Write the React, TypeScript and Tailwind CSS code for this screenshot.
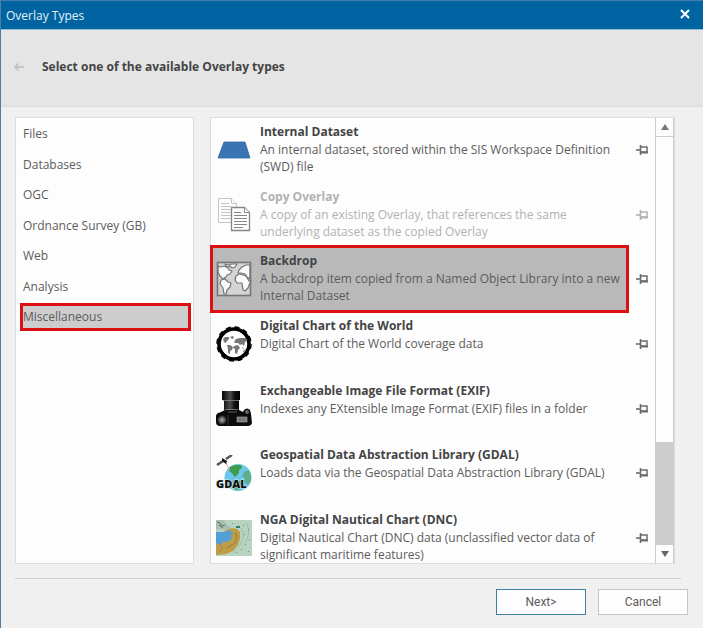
import { useState } from 'react';
import type { ReactNode } from 'react';
import { clsx } from 'clsx';

const CATEGORIES = ['Files', 'Databases', 'OGC', 'Ordnance Survey (GB)', 'Web', 'Analysis', 'Miscellaneous'];

function DatasetIcon() {
  return (
    <svg viewBox="0 0 36 36" className="size-9">
      <path d="M8 10h21l5 16H2z" fill="#3a74b3" stroke="#2f68a8" strokeWidth="0.8" />
    </svg>
  );
}

function CopyIcon() {
  return (
    <svg viewBox="0 0 36 36" className="size-9" fill="#fdfdfd" strokeWidth="1">
      <g stroke="#c4c4c4">
        <path d="M2.500 1.500h13l5 5v19h-18z" />
        <path d="M15.500 1.500v5h5" />
        <path d="M5 6.500h8M5 9.500h10M5 12.500h10M5 15.500h10M5 18.500h10M5 21.500h10" />
      </g>
      <g stroke="#868686">
        <path d="M15.500 10.500h13l5 5v18h-18z" strokeWidth="1.300" />
        <path d="M28.500 10.500v5h5" />
        <path d="M18 15.500h7M18 18.500h13M18 21.500h13M18 24.500h13M18 27.500h13M18 30.500h9" />
      </g>
    </svg>
  );
}

function BackdropIcon() {
  return (
    <svg viewBox="0 0 36 36" className="size-9">
      <rect x="1.500" y="1.500" width="33" height="33" fill="#d4d4d4" />
      <g fill="#fafafa" stroke="#757575" strokeWidth="1.200" strokeLinejoin="round">
        <path d="M2 5l3 1 3-1 4 2 1 2 3 1-2 3-3 1-1 2-2 1 1 2-2-1-3-3-2-4z" />
        <path d="M9 3l4 1 3-1 5 0-2 3-3 1-2-2-3 1z" />
        <path d="M5 19l4-1 3 3 3 1-1 4-3 3-1 4-2 0-1-6-3-4z" />
        <path d="M19 19l1-4 3-2 4 1 3 1 3 5 2 0-2 4-1 3-3 3-2-1-1-7-5 0z" />
        <path d="M22 12l1-3 3-3 4-2 4 0v14l-3-2-2-3-4-1z" />
      </g>
      <rect x="1.500" y="1.500" width="33" height="33" fill="none" stroke="#757575" strokeWidth="1.600" />
    </svg>
  );
}

function GlobeIcon() {
  return (
    <svg viewBox="0 0 36 36" className="size-9">
      <circle cx="18" cy="18" r="15" fill="#fff" stroke="#000" strokeWidth="3.600" />
      <circle cx="18" cy="18" r="17" fill="none" stroke="#000" strokeWidth="1.500" strokeDasharray="5 3.900" />
      <g fill="#777">
        <path d="M7 13l2-2 4 0 0 2-2 2-1 2-2-1z" />
        <path d="M14 11l3-1 1 2-2 1z" />
        <path d="M11 19l3 0 3 2-1 3-2 1 0 3-2-1 0-4z" />
        <path d="M18 20l4-1 2 3-2 2-1 4-2-1 0-4-2-1z" />
        <path d="M18 16l2-3 4-1 6 0 1 3-2 1-1 4-2-2-2 1-2-2-3 0z" />
        <path d="M27 25l3-2 0 2-3 1zM26 21l2 1-1 1z" />
      </g>
    </svg>
  );
}

function CameraIcon() {
  return (
    <svg viewBox="0 0 36 36" className="size-9">
      <defs>
        <linearGradient id="barrel" x1="0" x2="1" y1="0" y2="0">
          <stop offset="0" stopColor="#050505" />
          <stop offset="0.450" stopColor="#4d4d4d" />
          <stop offset="0.700" stopColor="#111" />
          <stop offset="1" stopColor="#000" />
        </linearGradient>
        <radialGradient id="knob">
          <stop offset="0" stopColor="#b5b5b5" />
          <stop offset="1" stopColor="#222" />
        </radialGradient>
      </defs>
      <path d="M6 0h18v9h-1v10H8V9H6z" fill="url(#barrel)" />
      <path d="M7 9.500h16M9 18.500h13" stroke="#888" strokeWidth="0.800" />
      <path d="M0 25q0-3 5-4l4-2h14l4 2 1-2q3-3 6 0l1 4 1 9q-1 3-4 3H4q-4 0-4-4z" fill="#0b0b0b" />
      <path d="M12 21h9" stroke="#5f5f5f" />
      <circle cx="6" cy="29" r="4.500" fill="url(#knob)" />
      <rect x="21" y="26" width="10" height="5" fill="#777" stroke="#aaa" strokeWidth="0.600" />
      <circle cx="31" cy="21" r="2" fill="#666" />
      <path d="M12 24v10" stroke="#3b3b3b" />
    </svg>
  );
}

function GdalIcon() {
  return (
    <svg viewBox="0 0 36 36" className="size-9">
      <circle cx="22" cy="22.500" r="13.500" fill="#6cc5ea" />
      <path d="M14 12l5-2 6 0 1 3-3 2 0 3-4 4-3-4-3-2z" fill="#3c9b4d" />
      <path d="M28 17l5-2 2 5 0 6-4 4-3-4 1-3-3-2z" fill="#5bb08a" />
      <path d="M17 26l9 0-2 8-5 1z" fill="#4da95f" />
      <path d="M10 8l4 8" stroke="#e98282" strokeWidth="0.800" />
      <path d="M1 10l6-4M10 4l6-4" stroke="#555" strokeWidth="2.500" />
      <path d="M6 3l5 3-1 3-4-3z" fill="#111" />
      <text x="0" y="33" textAnchor="start" fontFamily="Open Sans, sans-serif" fontSize="11" fontWeight="800" fill="#111" stroke="#d8edf0" strokeWidth="1" paintOrder="stroke">GDAL</text>
    </svg>
  );
}

function ChartIcon() {
  return (
    <svg viewBox="0 0 36 36" className="size-9">
      <rect width="36" height="36" fill="#b9d3c1" />
      <path d="M10 10l5-2 6 1 3 3 0 7-2 6-5 6-7 3-10 1v-17z" fill="#bd9d47" />
      <path d="M0 12l8 0 5-2 4 3-2 3 1 3-5 3-4 0-3 3-4-2z" fill="#539fd6" />
      <path d="M0 0h8l3 5 4 2-4 3-6-1-5 1z" fill="#a9bfb0" />
      <path d="M1 2l3 1 2 3 3-1M3 5l4 3" fill="none" stroke="#5c736b" strokeWidth="1" />
      <path d="M19 12l2 5-2 6-5 3M4 25l3 3-4 4M11 28l4-2" fill="none" stroke="#9a803a" strokeWidth="1" />
      <path d="M25 8q4 6 1 13t-9 12M31 3q4 12-2 20" fill="none" stroke="#98c0a8" strokeWidth="1" />
      <path d="M20 6h4v2h-4z" fill="#317c70" />
      <g fill="#6d8e7c">
        <path d="M27 5h1v1h-1zM32 9h1v1h-1zM28 14h1v1h-1zM33 19h1v1h-1zM29 24h1v1h-1zM25 29h1v1h-1zM32 31h1v1h-1zM20 32h1v1h-1zM16 3h1v1h-1z" />
      </g>
    </svg>
  );
}

function PinIcon() {
  return (
    <svg viewBox="0 0 12 10" className="h-[10px] w-3" fill="none" stroke="currentColor">
      <path d="M0 5h4" strokeWidth="1.600" />
      <path d="M4.500 0v10" strokeWidth="1.600" />
      <path d="M5 2h6v5H5" strokeWidth="1.500" />
      <path d="M5 7.500h7" strokeWidth="2" />
    </svg>
  );
}

type Overlay = { title: string; text: string; icon: ReactNode; disabled?: boolean };

const OVERLAYS: Overlay[] = [
  { title: 'Internal Dataset', text: 'An internal dataset, stored within the SIS Workspace Definition (SWD) file', icon: <DatasetIcon /> },
  { title: 'Copy Overlay', text: 'A copy of an existing Overlay, that references the same underlying dataset as the copied Overlay', icon: <CopyIcon />, disabled: true },
  { title: 'Backdrop', text: 'A backdrop item copied from a Named Object Library into a new Internal Dataset', icon: <BackdropIcon /> },
  { title: 'Digital Chart of the World', text: 'Digital Chart of the World coverage data', icon: <GlobeIcon /> },
  { title: 'Exchangeable Image File Format (EXIF)', text: 'Indexes any EXtensible Image Format (EXIF) files in a folder', icon: <CameraIcon /> },
  { title: 'Geospatial Data Abstraction Library (GDAL)', text: 'Loads data via the Geospatial Data Abstraction Library (GDAL)', icon: <GdalIcon /> },
  { title: 'NGA Digital Nautical Chart (DNC)', text: 'Digital Nautical Chart (DNC) data (unclassified vector data of significant maritime features)', icon: <ChartIcon /> },
];

export default function App() {
  const [category, setCategory] = useState('Miscellaneous');
  const [overlay, setOverlay] = useState('Backdrop');
  return (
    <div className="flex h-screen flex-col border-l border-[#4f7f9f] bg-[#f0f0f0] font-['Open_Sans',sans-serif] text-[12px] text-[#5c5c5c]">
      <div className="flex h-[30px] shrink-0 items-center justify-between border-t border-b border-t-[#3f7fa8] border-b-[#8fbcd8] bg-[#0064a2] pt-[2px] pr-[13px] pl-[5px] text-[#e3f0f8]">
        <span>Overlay Types</span>
        <button aria-label="Close" className="mb-1">
          <svg viewBox="0 0 10 10" className="size-[10px]" stroke="#fff" strokeWidth="2"><path d="M1 1l8 8M9 1l-8 8" /></svg>
        </button>
      </div>
      <header className="flex h-[77px] shrink-0 items-center gap-[18px] border-b border-[#dadada] bg-[#e5e5e5] pb-[2px] pl-[13px]">
        <button aria-label="Back" disabled>
          <svg viewBox="0 0 10 8" className="h-2 w-[10px]" fill="none" stroke="#bdbdbd" strokeWidth="1.500"><path d="M10 4H1M4.500 0.500L1 4l3.500 3.500" /></svg>
        </button>
        <h1 className="font-bold text-[#444]">Select one of the available Overlay types</h1>
      </header>

      <main className="flex min-h-0 flex-1 gap-4 pt-[10px] pr-[28px] pl-[14px]">
        <nav className="w-[179px] shrink-0 border border-[#dcdcdc] bg-[#fdfdfd] pt-[2px] pr-[2px] pl-1">
          <div className="flex h-[211px] flex-col justify-between">
            {CATEGORIES.map((c) => (
              <button
                key={c}
                onClick={() => setCategory(c)}
                className={clsx('h-7 border-3 text-left', c === category ? 'border-[#dc0f12] bg-[#cdcdcd]' : 'border-transparent')}
              >
                {c}
              </button>
            ))}
          </div>
        </nav>
        <div className="flex min-w-0 flex-1 border border-[#dcdcdc] bg-[#fdfdfd]">
          <ul className="-ml-px grid h-[452px] min-w-0 flex-1 grid-rows-7">
            {OVERLAYS.map((o) => (
              <li key={o.title} className={clsx('flex min-h-0 items-center', o.disabled && 'text-[#b2b2b2]')}>
                <button
                  disabled={o.disabled}
                  onClick={() => setOverlay(o.title)}
                  className={clsx('-my-px flex h-[68px] min-w-0 flex-1 items-center gap-2 border-3 pl-[3px] text-left', o.title === overlay ? 'border-[#dc0f12] bg-[#b9b9b9]' : 'border-transparent')}
                >
                  <span className="shrink-0">{o.icon}</span>
                  <span className="flex h-[54px] min-w-0 flex-1 flex-col leading-[17px]">
                    <span className={clsx('mb-px font-bold', !o.disabled && 'text-[#444]')}>{o.title}</span>
                    <span>{o.text}</span>
                  </span>
                </button>
                <button aria-label={`Pin ${o.title}`} disabled={o.disabled} className={clsx('mx-[7px]', !o.disabled && 'text-[#6c6c6c]')}>
                  <PinIcon />
                </button>
              </li>
            ))}
          </ul>
          <div className="flex w-[19px] shrink-0 flex-col border-x border-[#cdcdcd] bg-[#cdcdcd]">
            <button aria-label="Scroll up" className="flex h-[18px] items-center justify-center bg-[#fdfdfd]">
              <svg viewBox="0 0 8 6" className="h-[6px] w-2" fill="#777"><path d="M0 6l4-6 4 6z" /></svg>
            </button>
            <div className="mt-px h-[305px] bg-[#fdfdfd]" />
            <button aria-label="Scroll down" className="mt-auto flex h-[18px] items-center justify-center bg-[#fdfdfd]">
              <svg viewBox="0 0 8 6" className="h-[6px] w-2" fill="#666"><path d="M0 0l4 6 4-6z" /></svg>
            </button>
          </div>
        </div>
      </main>

      <div className="mt-[14px] mr-[22px] ml-[14px] border-t border-[#cfcfcf]" />
      <footer className="flex shrink-0 justify-end gap-3 pt-[10px] pr-[15px] pb-[13px] font-['Roboto',sans-serif]">
        <button className="h-[26px] w-[90px] border border-[#3f7fa3] bg-[#fdfdfd]">Next&gt;</button>
        <button className="h-[26px] w-[90px] border border-[#c6c6c6] bg-[#fdfdfd]">Cancel</button>
      </footer>
    </div>
  );
}
